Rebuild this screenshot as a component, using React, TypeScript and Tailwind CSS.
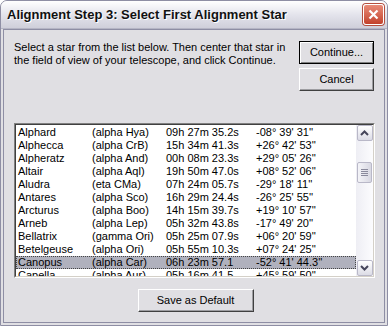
import React from "react";

const stars = [
  ["Alphard", "(alpha Hya)", "09h 27m 35.2s", "-08° 39' 31''"],
  ["Alphecca", "(alpha CrB)", "15h 34m 41.3s", "+26° 42' 53''"],
  ["Alpheratz", "(alpha And)", "00h 08m 23.3s", "+29° 05' 26''"],
  ["Altair", "(alpha Aql)", "19h 50m 47.0s", "+08° 52' 06''"],
  ["Aludra", "(eta CMa)", "07h 24m 05.7s", "-29° 18' 11''"],
  ["Antares", "(alpha Sco)", "16h 29m 24.4s", "-26° 25' 55''"],
  ["Arcturus", "(alpha Boo)", "14h 15m 39.7s", "+19° 10' 57''"],
  ["Arneb", "(alpha Lep)", "05h 32m 43.8s", "-17° 49' 20''"],
  ["Bellatrix", "(gamma Ori)", "05h 25m 07.9s", "+06° 20' 59''"],
  ["Betelgeuse", "(alpha Ori)", "05h 55m 10.3s", "+07° 24' 25''"],
  ["Canopus", "(alpha Car)", "06h 23m 57.1", "-52° 41' 44.3''"],
  ["Capella", "(alpha Aur)", "05h 16m 41.5", "+45° 59' 50''"],
];

const Btn = ({ label, def, cls }: { label: string; def?: boolean; cls: string }) => (
  <div
    className={`${cls} flex items-center justify-center bg-[#e0dfe3] text-[11px] text-black ${
      def
        ? "border border-black shadow-[inset_1px_1px_0_#ffffff,inset_-1px_-1px_0_#808080]"
        : "border border-t-white border-l-white border-b-[#404040] border-r-[#404040] shadow-[inset_-1px_-1px_0_#9d9da1]"
    }`}
  >
    {label}
  </div>
);

const Arrow = ({ up }: { up?: boolean }) => (
  <div className="h-[16px] w-[16px] mx-auto rounded-[2px] border border-[#b9b8c8] bg-gradient-to-b from-white to-[#dcdce6] flex items-center justify-center">
    <svg width="9" height="6" viewBox="0 0 9 6">
      <path
        d={up ? "M1 5 L4.5 1.5 L8 5" : "M1 1 L4.5 4.5 L8 1"}
        fill="none"
        stroke="#45455a"
        strokeWidth="2"
      />
    </svg>
  </div>
);

export default function App() {
  return (
    <div className="w-[390px] h-[326px] bg-white font-['Liberation_Sans',Arial,sans-serif]">
      <div className="w-[388px] h-[326px] flex flex-col rounded-t-[7px] border border-[#8e8ea4] bg-[#e0dfe3] overflow-hidden">
        <div className="h-[28px] flex items-center justify-between pl-[6px] pr-[3px] bg-gradient-to-b from-[#ffffff] via-[#e4e4ec] to-[#cfcfda] border-b border-[#b5b5c4]">
          <span className="text-[13px] font-bold text-[#111] [text-shadow:1px_1px_0_#ffffff]">
            Alignment Step 3: Select First Alignment Star
          </span>
          <div className="h-[21px] w-[21px] rounded-[3px] border border-white bg-gradient-to-b from-[#e88b78] to-[#c2412c] flex items-center justify-center shadow-[0_0_0_1px_#b45040]">
            <svg width="11" height="11" viewBox="0 0 11 11">
              <path d="M1.5 1.5 L9.5 9.5 M9.5 1.5 L1.5 9.5" stroke="white" strokeWidth="2.2" />
            </svg>
          </div>
        </div>
        <div className="flex-1 mx-[2px] mb-[2px] border border-[#8e8ea4] flex flex-col pl-[10px] pr-[7px]">
          <div className="flex justify-between pt-[11px] h-[93px]">
            <p className="text-[11px] leading-[13px] text-black w-[280px]">
              Select a star from the list below. Then center that star in the field of view of your
              telescope, and click Continue.
            </p>
            <div className="flex flex-col gap-[4px] mr-[3px]">
              <Btn label="Continue..." def cls="w-[75px] h-[23px]" />
              <Btn label="Cancel" cls="w-[75px] h-[23px]" />
            </div>
          </div>
          <div className="w-[361px] h-[155px] border border-t-[#808080] border-l-[#808080] border-b-white border-r-white">
            <div className="h-full border border-t-[#404040] border-l-[#404040] border-b-[#d4d0c8] border-r-[#d4d0c8] bg-white flex overflow-hidden">
              <div className="flex-1 pt-[1px] overflow-hidden">
                {stars.map((s, i) => (
                  <div
                    key={s[0]}
                    className={`flex h-[13px] items-center text-[11px] leading-[13px] text-black pl-[2px] ${
                      i === 10 ? "bg-[#b0b1bd] outline-1 outline-dotted outline-[#444] -outline-offset-1" : ""
                    }`}
                  >
                    <span className="w-[74px] shrink-0">{s[0]}</span>
                    <span className="w-[74px] shrink-0">{s[1]}</span>
                    <span className="w-[90px] shrink-0">{s[2]}</span>
                    <span>{s[3]}</span>
                  </div>
                ))}
              </div>
              <div className="w-[17px] bg-gradient-to-r from-[#eeeef4] to-[#fcfcfe] flex flex-col justify-between">
                <Arrow up />
                <div className="flex-1 relative">
                  <div className="absolute left-[1px] top-[21px] h-[21px] w-[15px] rounded-[2px] border border-[#b9b8c8] bg-gradient-to-r from-[#f4f4f8] to-[#d8d8e2] flex flex-col items-center justify-center gap-[1px]">
                    <div className="w-[7px] h-[1px] bg-[#8a8a9c]" />
                    <div className="w-[7px] h-[1px] bg-[#8a8a9c]" />
                    <div className="w-[7px] h-[1px] bg-[#8a8a9c]" />
                    <div className="w-[7px] h-[1px] bg-[#8a8a9c]" />
                  </div>
                </div>
                <Arrow />
              </div>
            </div>
          </div>
          <div className="flex justify-center mt-[11px]">
            <Btn label="Save as Default" cls="w-[116px] h-[23px]" />
          </div>
        </div>
      </div>
    </div>
  );
}
